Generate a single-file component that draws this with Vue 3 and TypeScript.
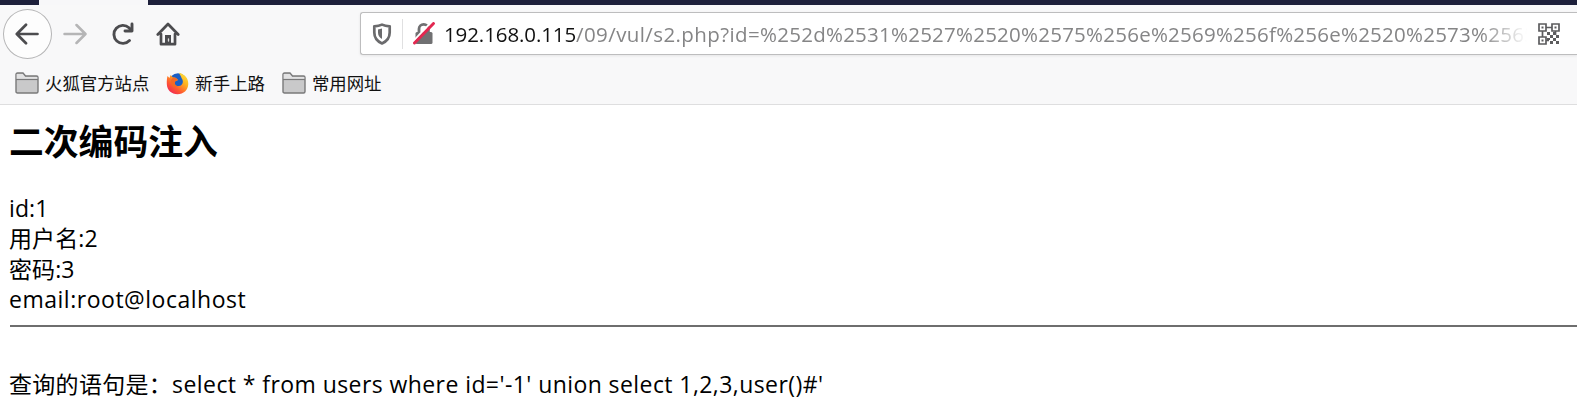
<script setup lang="ts">
interface Bookmark {
  label: string
  icon: 'folder' | 'firefox'
}

const bookmarks: Bookmark[] = [
  { label: '火狐官方站点', icon: 'folder' },
  { label: '新手上路', icon: 'firefox' },
  { label: '常用网址', icon: 'folder' },
]

const host = '192.168.0.115'
const path = '/09/vul/s2.php?id='
const query = '%252d%2531%2527%2520%2575%256e%2569%256f%256e%2520%2573%2565'

const fields = [
  { name: 'id', value: '1', kind: 'short' },
  { name: '用户名', value: '2', kind: 'short' },
  { name: '密码', value: '3', kind: 'short' },
  { name: 'email', value: 'root@localhost', kind: 'long' },
]

const sql = "select * from users where id='-1' union select 1,2,3,user()#'"
</script>

<template>
  <div class="window">
    <div class="tabstrip"><div class="tab"></div></div>
    <div class="nav">
      <div class="back">
        <svg width="24" height="24" viewBox="0 0 24 24" fill="none" stroke="#4c4c4f" stroke-width="2.7" stroke-linecap="round" stroke-linejoin="round"><path d="M22.500 12H2M11 2.800L1.800 12L11 21.200" /></svg>
      </div>
      <svg class="forward" width="24" height="24" viewBox="0 0 24 24" fill="none" stroke="#b5b5b6" stroke-width="2.500" stroke-linecap="round" stroke-linejoin="round"><path d="M1.500 12H22M13.500 3L22.500 12L13.500 21" /></svg>
      <svg class="reload" width="24" height="24" viewBox="0 0 24 24" fill="none" stroke="#4c4c4f" stroke-width="2.900" stroke-linecap="round" stroke-linejoin="round"><path d="M18.500 18.500A9 9 0 1 1 18 5.700L20 8" /><path d="M21 2V9H14" /></svg>
      <svg class="home" width="24" height="24" viewBox="0 0 24 24" fill="none" stroke="#4c4c4f" stroke-width="2.700" stroke-linecap="round" stroke-linejoin="round"><path d="M1.800 12.500L12 2L22.200 12.500M5 12V22.200H19V12" /><path d="M9 22V13H15V22Z" fill="#4c4c4f" stroke="none" /><path d="M12.500 17V19" stroke="#ddd" stroke-width="1.300" /></svg>
      <div class="urlbar">
        <svg class="shield" width="20" height="22" viewBox="0 0 20 22"><path d="M10 1.600C12.500 2.800 15 3.200 17.700 3.300V9.500C17.700 14.800 14.500 18.500 10 20.400C5.500 18.500 2.300 14.800 2.300 9.500V3.300C5 3.200 7.500 2.800 10 1.600Z" fill="none" stroke="#6b6b6d" stroke-width="2.700" stroke-linejoin="round" /><path d="M10 5.500V16C7.300 14.400 6 12.500 6 9.500V6.500Z" fill="#6b6b6d" /></svg>
        <span class="divider"></span>
        <svg class="lock" width="22" height="23" viewBox="0 0 22 23"><path d="M6 11V7A4.700 4.700 0 0 1 15.400 7V11" fill="none" stroke="#707072" stroke-width="2.800" /><rect x="2.500" y="10" width="17" height="12" rx="1.500" fill="#707072" /><path d="M0 19.500L18.500 0" stroke="#fff" stroke-width="2" /><path d="M1.500 21L20.500 1.500" stroke="#e22850" stroke-width="2.900" stroke-linecap="round" /></svg>
        <div class="address"><span class="host">{{ host }}</span><span class="path">{{ path }}</span><span class="query">{{ query }}</span></div>
        <svg class="qr" width="22" height="22" viewBox="0 0 22 22" fill="none" stroke="#5c5c5e" stroke-width="1.700">
          <path d="M1 1h7v7H1zM14 1h7v7h-7zM1 14h7v7H1zM8 4.500h6M4.500 8v6M17.500 8v4M8 17.500h3" />
          <path fill="#5c5c5e" stroke="none" d="M3.500 3.500h2v2h-2zM16.500 3.500h2v2h-2zM3.500 16.500h2v2h-2zM9 9h3v3H9zM12 12h3v3h-3zM15 9h3v3h-3zM18 12h3v3h-3zM9 15h3v2H9zM15 15h3v3h-3zM12 18h3v3h-3zM18 18h3v3h-3z" />
        </svg>
      </div>
    </div>
    <div class="bookmarks">
      <div v-for="mark in bookmarks" :key="mark.label" class="bookmark" :class="mark.icon">
        <svg v-if="mark.icon === 'folder'" width="24" height="22" viewBox="0 0 24 22"><path d="M1 19.500V2.500Q1 1 2.500 1H8L10.500 4H21.500Q23 4 23 5.500V19.500Q23 21 21.500 21H2.500Q1 21 1 19.500Z" fill="#c9c9ca" stroke="#79797a" stroke-width="1.400" /><path d="M1.700 2H7.700L10 5H22.300V7.300H1.700Z" fill="#e2e2e3" /><path d="M1 7.500H23" stroke="#79797a" stroke-width="1.200" /></svg>
        <svg v-else width="23" height="23" viewBox="0 0 23 23">
          <defs><linearGradient id="flame" x1="1" y1="0" x2="0.200" y2="1"><stop offset="0" stop-color="#fff044" /><stop offset="0.400" stop-color="#ffb020" /><stop offset="0.720" stop-color="#ff5930" /><stop offset="1" stop-color="#ef2458" /></linearGradient></defs>
          <circle cx="12" cy="10.500" r="9.300" fill="#1c5fc5" />
          <path d="M1.500 4L3.500 6L4.500 3L7 5.500C10 5 11 7 12 8L9 9.500C8 12 10 14.500 13 14C17 13.500 18 9 15.500 6C15 4 13.500 2.500 13 .8C18 2 22.500 6 22.300 12C22 18 17.500 22.300 11.500 22.300C5.500 22.300 1 18 .8 12C.7 8.500 1 6 1.500 4Z" fill="url(#flame)" />
          <path d="M7 5.500C10 5 11 7 12 8L9 9.500C8 12 10 14.500 13 14C8 17 4 13 5 8Z" fill="#f56a25" />
        </svg>
        <span>{{ mark.label }}</span>
      </div>
    </div>
    <main class="page">
      <h2>二次编码注入</h2>
      <div v-for="field in fields" :key="field.name" class="field" :class="field.kind">{{ field.name }}:{{ field.value }}</div>
      <hr />
      <p class="statement"><span class="label">查询的语句是：</span><span class="sql">{{ sql }}</span></p>
    </main>
  </div>
</template>

<style>
body {
  margin: 0;
  background: #fff;
  overflow: hidden;
}
</style>

<style scoped>
.window {
  height: 408px;
  overflow: hidden;
  background: #fff;
  color: #000;
  font-family: "Open Sans", "Noto Sans CJK SC", sans-serif;
}
.window svg {
  flex: none;
  display: block;
}
.tabstrip {
  height: 5px;
  padding-left: 39px;
  background: #1d203b;
}
.tab {
  width: 109px;
  height: 5px;
  background: #f7f7f9;
}
.nav {
  height: 59px;
  display: flex;
  align-items: center;
  background: #f8f8f9;
}
.back {
  box-sizing: border-box;
  flex: none;
  width: 49px;
  height: 50px;
  margin-left: 3px;
  margin-bottom: 2px;
  border: 1px solid #b5b5b6;
  border-radius: 50%;
  background: #fdfdfd;
  display: flex;
  align-items: center;
  justify-content: center;
}
.back svg {
  margin-right: 2px;
}
.forward {
  margin-left: 11px;
}
.reload {
  margin-left: 24px;
}
.home {
  margin-left: 21px;
}
.forward,
.reload,
.home {
  margin-bottom: 1px;
}
.urlbar {
  box-sizing: border-box;
  flex: 1;
  min-width: 0;
  height: 43px;
  margin-left: 180px;
  margin-bottom: 2px;
  padding: 0 17px 0 11px;
  border: 1px solid #bdbdbe;
  border-right: 0;
  border-radius: 3px 0 0 3px;
  background: #fff;
  box-shadow: 0 1px 3px rgba(0, 0, 0, 0.08);
  display: flex;
  align-items: center;
}
.divider {
  width: 1px;
  height: 30px;
  margin: 0 10px;
  background: #e0e0e1;
}
.address {
  flex: 1;
  min-width: 0;
  margin-left: 9px;
  margin-right: 11px;
  overflow: hidden;
  white-space: nowrap;
  font-size: 20.5px;
  line-height: 40px;
  color: #858586;
  mask-image: linear-gradient(to left, transparent 0, #000 46px);
}
.host {
  color: #111;
  letter-spacing: -0.1px;
}
.path {
  letter-spacing: 0.4px;
}
.query {
  letter-spacing: 0.24px;
}
.bookmarks {
  box-sizing: border-box;
  height: 41px;
  padding: 0 0 2px 15px;
  border-bottom: 1px solid #dededf;
  background: #f8f8f9;
  display: flex;
  align-items: center;
  font-size: 17.4px;
  line-height: 24px;
  color: #111;
}
.bookmark {
  display: flex;
  align-items: center;
  gap: 6px;
  margin-right: 17px;
}
.page {
  padding: 12px 0 0 9px;
  font-size: 23px;
}
h2 {
  height: 50px;
  margin: 0 0 26px;
  font-size: 34.8px;
  line-height: 50px;
  font-weight: 700;
}
.field {
  height: 30.3px;
  line-height: 30.3px;
  white-space: nowrap;
  letter-spacing: 0.1px;
}
.long {
  letter-spacing: 0.52px;
}
hr {
  height: 2px;
  margin: 11px 0 42px 1px;
  border: 0;
  background: #6e6e6e;
}
.statement {
  margin: 0;
  line-height: 30px;
  white-space: nowrap;
}
.label {
  letter-spacing: 0.3px;
}
.sql {
  letter-spacing: 0.42px;
}
</style>
